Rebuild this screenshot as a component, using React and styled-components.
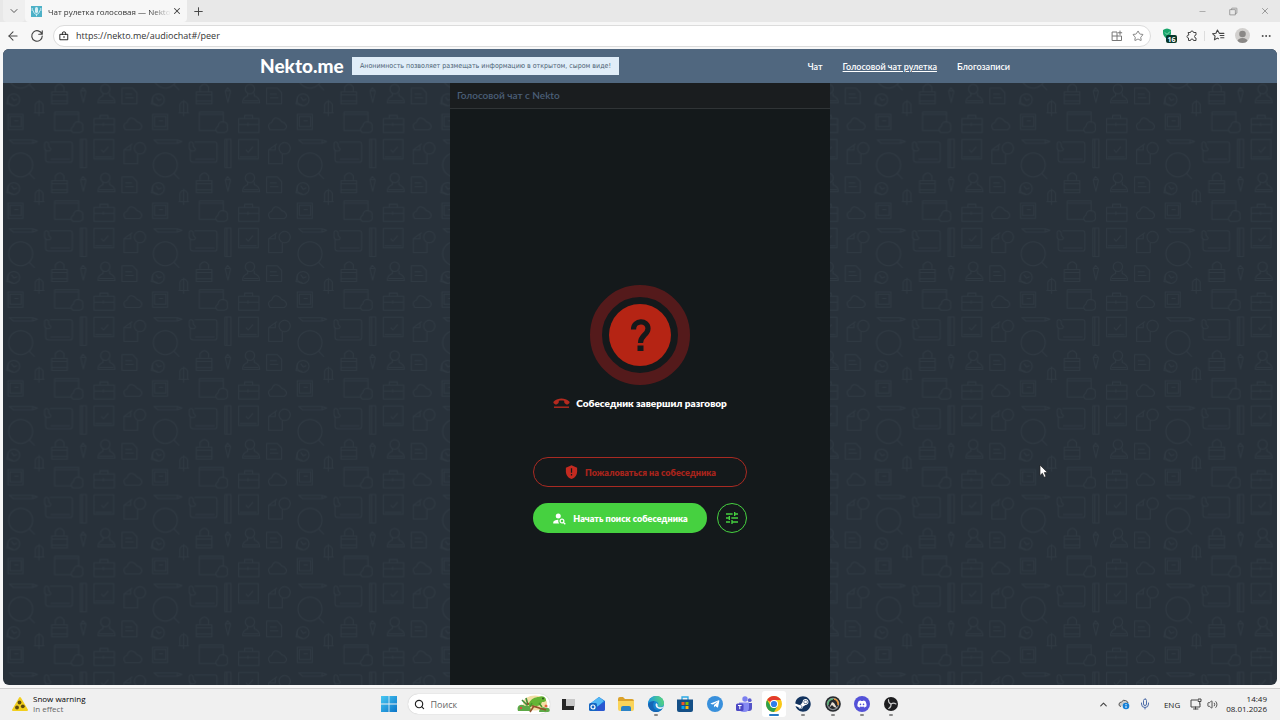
import React from 'react';
import styled, { createGlobalStyle } from 'styled-components';
import { FaDiscord, FaSteam, FaTelegramPlane } from 'react-icons/fa';
import { MdPersonSearch, MdTune } from 'react-icons/md';
import {
  ArrowLeft,
  ChevronDown,
  ChevronUp,
  Mic,
  Minus,
  MoreHorizontal,
  Plus,
  Search,
  Star,
  Volume2,
  X,
} from 'lucide-react';

const GlobalStyle = createGlobalStyle`
  * {
    box-sizing: border-box;
  }

  body {
    margin: 0;
    font-family: 'Open Sans', 'Noto Sans', sans-serif;
    background: #f7f7f7;
  }

  button, input {
    font: inherit;
    border: 0;
    padding: 0;
    background: none;
  }

  svg {
    display: block;
    flex-shrink: 0;
  }
`;

const Desktop = styled.div`
  display: flex;
  flex-direction: column;
  min-height: 100vh;
  position: relative;
`;

/* Browser window */

const TabStrip = styled.div`
  display: flex;
  align-items: stretch;
  height: 22px;
  padding-left: 3px;
  background: #e8e8e8;
  color: #444;
`;

const IconButton = styled.button`
  display: flex;
  align-items: center;
  justify-content: center;
  width: ${({ $width }) => $width || 24}px;
  color: ${({ $color }) => $color || '#444'};
`;

const TabMenu = styled(IconButton)`
  background: #efefef;
  border-radius: 0 0 4px 4px;
`;

const Tab = styled.div`
  display: flex;
  align-items: center;
  width: 162px;
  padding: 0 4px 0 6px;
  background: #f7f7f7;
  border-radius: 0 0 4px 4px;
`;

const TabTitle = styled.span`
  flex: 1;
  margin-left: 6px;
  white-space: nowrap;
  font-size: 8px;
  color: #333;
  mask-image: linear-gradient(90deg, #000 84%, transparent);
`;

const WindowControls = styled.div`
  display: flex;
  margin-left: auto;
`;

const Toolbar = styled.div`
  display: flex;
  align-items: center;
  height: 27px;
  padding: 0 2px 0 1px;
`;

const AddressBar = styled.div`
  display: flex;
  flex: 1;
  align-items: center;
  height: 22px;
  margin: 0 6px 0 4px;
  padding: 0 2px 0 5px;
  background: #fff;
  border: 1px solid #dcdcdc;
  border-radius: 11px;
`;

const AddressInput = styled.input`
  flex: 1;
  margin-left: 7px;
  font-size: 9px;
  color: #333;
  outline: none;
`;

const Divider = styled.span`
  width: 1px;
  height: 10px;
  margin: 0 1px;
  background: #ddd;
`;

const Avatar = styled.span`
  display: block;
  overflow: hidden;
  width: 15px;
  height: 15px;
  border-radius: 50%;
  background: #d2d0ce;
`;

/* Site */

const Page = styled.div`
  display: flex;
  flex: 1;
  flex-direction: column;
  margin: 0 3px 3px;
  overflow: hidden;
  border-radius: 6px;
  background: #28313a;
  font-family: Lato, 'Noto Sans', sans-serif;
`;

const SiteHeader = styled.header`
  display: flex;
  justify-content: center;
  background: #50677f;
`;

const HeaderInner = styled.div`
  display: flex;
  align-items: center;
  width: 760px;
  height: 34px;
`;

const Logo = styled.a`
  width: 92px;
  color: #fff;
  font-size: 19px;
  font-weight: 900;
  line-height: 32px;
  text-decoration: none;
`;

const Banner = styled.div`
  height: 18px;
  padding: 0 8px;
  background: #e0edf8;
  color: #4b5f73;
  font-family: 'DejaVu Sans Condensed', 'DejaVu Sans', sans-serif;
  font-size: 7px;
  line-height: 19px;
  white-space: nowrap;
`;

const Nav = styled.nav`
  display: flex;
  gap: 20px;
  margin-left: auto;
  padding-right: 10px;
`;

const NavLink = styled.a`
  color: #fff;
  font-size: 9px;
  font-weight: 600;
  white-space: nowrap;
  text-decoration: ${({ $active }) => ($active ? 'underline' : 'none')};
`;

const Stage = styled.div`
  display: grid;
  flex: 1;
  grid-template-columns: 1fr 380px 1fr;
`;

const Wallpaper = styled.svg`
  grid-area: 1 / 1 / 2 / 4;
  width: 100%;
  height: 100%;
`;

const Chat = styled.main`
  display: flex;
  grid-area: 1 / 2 / 2 / 3;
  flex-direction: column;
  background: #14191b;
  z-index: 1;
`;

const ChatTitle = styled.h1`
  height: 26px;
  margin: 0;
  padding: 0 7px;
  background: #1a1d1f;
  border-bottom: 1px solid #303436;
  color: #4b5f78;
  font-size: 10px;
  font-weight: 600;
  line-height: 25px;
`;

const Call = styled.section`
  display: flex;
  flex: 1;
  flex-direction: column;
  align-items: center;
  justify-content: center;
  padding-top: 24px;
`;

const Status = styled.p`
  display: flex;
  align-items: center;
  gap: 6px;
  height: 16px;
  margin: 10px 0 46px;
  color: #fff;
  font-size: 10px;
  font-weight: 800;
  white-space: nowrap;
`;

const Actions = styled.div`
  display: grid;
  grid-template-columns: 174px 30px;
  gap: 16px 10px;
`;

const ActionButton = styled.button`
  display: flex;
  align-items: center;
  justify-content: center;
  gap: 6px;
  height: 30px;
  border-radius: 15px;
  font-size: 9px;
  font-weight: 800;
  white-space: nowrap;
`;

const ReportButton = styled(ActionButton)`
  grid-column: 1 / 3;
  border: 1px solid #a82a22;
  color: #a8241c;
`;

const SearchButton = styled(ActionButton)`
  background: #46d140;
  color: #fff;
`;

const SettingsButton = styled(ActionButton)`
  border: 1px solid #46d140;
  color: #46d140;
`;

/* Taskbar */

const Taskbar = styled.footer`
  display: grid;
  grid-template-columns: 1fr auto 1fr;
  height: 32px;
  padding-bottom: 1px;
  background: #f0f0f0;
  border-top: 1px solid #cfcfcf;
  color: #222;
`;

const Weather = styled.button`
  display: flex;
  align-items: center;
  gap: 5px;
  padding-left: 12px;
  font-size: 8px;
  line-height: 10px;
  text-align: left;
`;

const Muted = styled.div`
  color: #666;
`;

const Dock = styled.div`
  display: flex;
  align-items: center;
`;

const SearchBox = styled.label`
  display: flex;
  align-items: center;
  width: 142px;
  height: 20px;
  margin: 0 4px;
  padding-left: 6px;
  background: #fff;
  border-radius: 10px;
  box-shadow: 0 0 1px #aaa;
`;

const SearchInput = styled.input`
  flex: 1;
  min-width: 0;
  margin-left: 6px;
  font-size: 9px;
  outline: none;

  &::placeholder {
    color: #666;
  }
`;

const AppList = styled.div`
  display: flex;
  justify-content: space-between;
  width: 352px;
`;

const AppButton = styled.button`
  display: flex;
  flex-direction: column;
  align-items: center;
  justify-content: center;
  gap: 2px;
  width: 24px;
  height: 26px;
  margin: 0 2px;
  padding-top: 4px;
  border-radius: 3px;
  background: ${({ $active }) => ($active ? '#fff' : 'none')};

  &::after {
    content: '';
    width: ${({ $active }) => ($active ? 10 : 4)}px;
    height: 2px;
    border-radius: 1px;
    background: ${({ $active, $open }) =>
      $active ? '#2779c4' : $open ? '#888' : 'transparent'};
  }
`;

const AppCircle = styled.span`
  display: flex;
  align-items: center;
  justify-content: center;
  width: 16px;
  height: 16px;
  border-radius: 50%;
  background: ${({ $color }) => $color};
  color: #fff;
`;

const Tray = styled.div`
  display: flex;
  align-items: center;
  justify-content: flex-end;
  padding-right: 13px;
  font-size: 8px;
`;

const Language = styled.span`
  margin: 0 8px;
`;

const Clock = styled.time`
  margin-left: 6px;
  line-height: 10px;
  text-align: right;
`;

const Cursor = styled.svg`
  position: absolute;
  left: 1039px;
  top: 464px;
  z-index: 2;
  pointer-events: none;
`;

const LineIcon = ({ size = 12, children }) => (
  <svg
    width={size}
    height={size}
    viewBox="0 0 24 24"
    fill="none"
    stroke="currentColor"
    strokeWidth="2"
    strokeLinecap="round"
    strokeLinejoin="round"
  >
    {children}
  </svg>
);

const Favicon = () => (
  <svg width="11" height="11" viewBox="0 0 11 11">
    <rect width="11" height="11" fill="#4db1c7" />
    <rect x="4" y="1" width="3" height="6" rx="1.5" fill="#d7eff5" />
    <path
      d="M2.4 4.5c0 5 6.200 5 6.200 0M5.500 8.200v2M1.200 2v3M9.800 2v3"
      fill="none"
      stroke="#d7eff5"
      strokeWidth="0.9"
    />
  </svg>
);

const Doodles = () => (
  <Wallpaper aria-hidden="true">
    <defs>
      <pattern
        id="doodles"
        width="434"
        height="266.5"
        patternUnits="userSpaceOnUse"
        patternTransform="translate(1.67 54.3) scale(0.3333)"
      >
        <g
          transform="translate(-14 -172)"
          fill="none"
          stroke="#303a43"
          strokeWidth="3"
          strokeLinejoin="round"
        >
          <path d="M28 180H98L112 185 98 190H40zM98 180v10" />
          <circle cx="62" cy="255" r="36" />
          <path d="M88 281l16 16" />
          <path d="M150 186H212Q217 186 217 192V240Q217 247 210 247H146Q137 247 137 238V212M134 190c4-8 14-2 12 6s10 8 6 14-18 4-18-6zM152 238H210" />
          <path d="M241 178h18v85h-18zM247 178v85" />
          <path d="M282 179h59v58h-59zM286 231h50M304 210l7 7 14-16" />
          <path d="M397 192L372 210V251H413V222M372 210h20v-14" />
          <circle cx="420" cy="205" r="17" />
          <path d="M155 302H202V338H155zM155 311h47M155 330h47M166 300V288Q180 270 192 288V300" />
          <path d="M249 290l9 10-8 34-8-34zM244 299h12" />
          <circle cx="316" cy="294" r="14" />
          <path d="M309 306v8q-15 5-15 21h51q0-16-16-21v-8M298 329h43" />
          <path d="M366 291H398L411 305V338H366zM376 309h20M376 320h25" />
          <circle cx="41" cy="326" r="18" />
          <path d="M34 318l8 10 9-4M25 318l-5 20 19 3" />
          <path d="M106 365V340Q117 320 129 340V365zM102 365h31M117 327v48" />
          <path d="M24 370H69V415H24zM30 376h34v30H30zM43 389h12" />
          <path d="M164 363H236V394M214 418H164V363M164 370h72" />
          <path d="M218 424q-10-10 2-18 3-18 19-13 12 3 9 15 4 14-9 16z" />
          <path d="M282 382H343V424H282zM282 400h61M300 381v-8h24v8M310 395v10" />
          <path d="M376 416q-11-16 5-22 8-22 25-8 5 8 14 10 12 12-1 20z" />
        </g>
      </pattern>
    </defs>
    <rect width="100%" height="100%" fill="url(#doodles)" />
  </Wallpaper>
);

const CallBadge = () => (
  <svg width="100" height="100" viewBox="0 0 100 100">
    <circle cx="50" cy="50" r="44" fill="none" stroke="#541a1b" strokeWidth="12" />
    <circle cx="50" cy="50" r="31" fill="#b52414" />
    <path
      d="M43.500 44.500C43.500 34.500 58 34.500 58 43.500C58 50 50.500 50 50.500 58"
      fill="none"
      stroke="#14191b"
      strokeWidth="5.200"
    />
    <rect x="47.500" y="60.500" width="6" height="5.500" fill="#14191b" />
  </svg>
);

const HangUpIcon = () => (
  <svg width="17" height="12" viewBox="0 0 17 12" fill="#b52a1f">
    <path d="M1 6.500C.2 5.800.2 5 1 4.200 5.200.6 11.800.6 16 4.200c.8.8.8 1.600 0 2.300L14.600 7.400c-.6.3-1.100.2-1.600-.2l-1.300-1c-.4-.3-.5-.7-.5-1.100V3.800C9.500 3.300 7.500 3.300 5.800 3.800v1.300c0 .4-.1.800-.5 1.100L4 7.200c-.5.4-1 .5-1.600.2z" />
    <rect x="1" y="9.500" width="15" height="1.400" />
  </svg>
);

const ShieldIcon = () => (
  <svg width="15" height="16" viewBox="0 0 24 24" fill="#c32a20">
    <path d="M12 1L3 5v6c0 5.550 3.840 10.740 9 12 5.160-1.260 9-6.450 9-12V5z" />
    <path d="M11 6h2v7h-2zM11 15h2v2.500h-2z" fill="#14191b" />
  </svg>
);

const SnowIcon = () => (
  <svg width="16" height="16" viewBox="0 0 16 16">
    <path
      d="M8 2L15 14H1z"
      fill="#f2cf1d"
      stroke="#f2cf1d"
      strokeWidth="2"
      strokeLinejoin="round"
    />
    <g fill="#5c4a10">
      <circle cx="7.500" cy="6.500" r="1.900" />
      <circle cx="5" cy="11.500" r="1.900" />
      <circle cx="10.800" cy="10.300" r="1.900" />
    </g>
  </svg>
);

const WindowsLogo = () => (
  <svg width="16" height="16" viewBox="0 0 16 16">
    <defs>
      <linearGradient id="win" x1="0" y1="0" x2="1" y2="1">
        <stop offset="0" stopColor="#48c8f2" />
        <stop offset="1" stopColor="#0a74c8" />
      </linearGradient>
    </defs>
    <path d="M0 0h7.600v7.600H0zM8.400 0H16v7.600H8.400zM0 8.400h7.600V16H0zM8.400 8.400H16V16H8.400z" fill="url(#win)" />
  </svg>
);

const Gecko = () => (
  <svg width="33" height="18" viewBox="0 0 33 18">
    <ellipse cx="18" cy="8" rx="12" ry="7.500" fill="#f3dfa6" />
    <path d="M1 16C-1 11 4 8 8 11c2-2 6 0 6 5zM22 17c0-4 4-6 7-4 4-1 5 4 2 4z" fill="#5da947" />
    <path d="M5 5l5 5M9 3l2 7" stroke="#3f8c3b" strokeWidth="1.600" />
    <path d="M10 8c4 3 9 4 19 7M17 11l-4 6" fill="none" stroke="#96512b" strokeWidth="1.600" />
    <path d="M12 8c2-4 6-6 10-6 3-2 7 0 7 3 0 2-3 2-4 2-1 4-6 5-9 3l-4 2z" fill="#65b534" />
    <path d="M15 8l-2 4M22 8l3 4" stroke="#4b952c" strokeWidth="1.500" />
    <circle cx="26" cy="3.500" r="0.900" fill="#24491a" />
    <circle cx="29" cy="11" r="1.500" fill="#e4643e" />
    <circle cx="4" cy="13" r="1.200" fill="#d9533a" />
  </svg>
);

const TaskViewIcon = () => (
  <svg width="16" height="16" viewBox="0 0 16 16">
    <path d="M5 3h10v8H5z" fill="#c8c8c8" />
    <path d="M2 3h4v7h8v4H2z" fill="#262626" />
  </svg>
);

const OutlookIcon = () => (
  <svg width="16" height="16" viewBox="0 0 16 16">
    <path d="M2 7l8-6 6 4v8q0 2-2 2H5z" fill="#1b6fd8" />
    <path d="M2 7l8-6 5 4-7 6z" fill="#52b8f5" />
    <path d="M3 14L16 6v7q0 2-2 2H5z" fill="#2a56d0" />
    <rect y="7" width="8" height="8" rx="1.500" fill="#1466c2" />
    <circle cx="4" cy="11" r="2" fill="none" stroke="#fff" strokeWidth="1.200" />
  </svg>
);

const FolderIcon = () => (
  <svg width="16" height="16" viewBox="0 0 16 16">
    <path d="M0 3q0-2 2-2h3l2 2h7q2 0 2 2v5H0z" fill="#dba22a" />
    <path d="M0 5h16v8q0 2-2 2H2q-2 0-2-2z" fill="#fad45a" />
    <path d="M3 15v-3q0-2 2-2h6q2 0 2 2v3z" fill="#2b83c6" />
  </svg>
);

const EdgeIcon = () => (
  <svg width="16" height="16" viewBox="0 0 16 16">
    <defs>
      <linearGradient id="edge" x1="0" y1="0.300" x2="1" y2="0">
        <stop offset="0" stopColor="#1b9de2" />
        <stop offset="1" stopColor="#5fdc6c" />
      </linearGradient>
    </defs>
    <circle cx="8" cy="8" r="8" fill="#1484d2" />
    <path d="M0 8C1 4 5 4 6.500 5.500 4 8 5 13 9 14.300c2 .6 4.200-.3 5.600-1.800C11 18 1 17.500 0 8z" fill="#1565b5" />
    <path d="M0 8C1-2 15-3 16 7c.3 4-5 4.800-6.400 3 1.200-1 1-4.400-2.600-4.800C4 4.800 1 6 0 8z" fill="url(#edge)" />
    <path d="M8 7.300c1.600.2 2 1.700 1.500 2.700 1 1.900 5 1.800 6.200-.2-.3 2-1.800 3.200-3.400 3.200C8.500 13 6.700 9.500 8 7.300z" fill="#eef4f7" />
  </svg>
);

const StoreIcon = () => (
  <svg width="16" height="16" viewBox="0 0 16 16">
    <path d="M5 4V1h6v3" fill="none" stroke="#2aa8e5" strokeWidth="1.300" />
    <path d="M0 3.500h16V14q0 2-2 2H2q-2 0-2-2z" fill="#154f86" />
    <path d="M4.500 6h3v3h-3z" fill="#f35325" />
    <path d="M8.500 6h3v3h-3z" fill="#81bc06" />
    <path d="M4.500 10h3v3h-3z" fill="#05a6f0" />
    <path d="M8.500 10h3v3h-3z" fill="#ffba08" />
  </svg>
);

const TeamsIcon = () => (
  <svg width="16" height="16" viewBox="0 0 16 16">
    <circle cx="9" cy="3" r="2.700" fill="#7b7ff0" />
    <circle cx="13.700" cy="4.200" r="1.900" fill="#5a5bd0" />
    <path d="M10 7h6v5q0 3-3 3h-3z" fill="#5454c8" />
    <path d="M3 6.500h10V12q0 4-5 4T3 12z" fill="#8589f2" />
    <rect y="7.500" width="7.500" height="7.500" rx="1.500" fill="#4c48c4" />
    <path d="M2 9.500h3.600M3.800 9.500v3.700" stroke="#fff" />
  </svg>
);

const ChromeIcon = () => (
  <svg width="16" height="16" viewBox="0 0 16 16">
    <circle cx="8" cy="8" r="8" fill="#f9c716" />
    <path d="M8 8L1.100 4A8 8 0 0 1 14.900 4L8 4z" fill="#e33b2e" />
    <path d="M1.100 4L4.600 10 8 12l0 4A8 8 0 0 1 1.100 4z" fill="#2da04d" />
    <path d="M8 16l3.500-6L8 12z" fill="#2da04d" />
    <circle cx="8" cy="8" r="4" fill="#fff" />
    <circle cx="8" cy="8" r="3.100" fill="#2e7de9" />
  </svg>
);

const GameIcon = () => (
  <svg width="16" height="16" viewBox="0 0 16 16">
    <circle cx="8" cy="8" r="7.800" fill="#25282c" />
    <circle cx="8" cy="8" r="5.600" fill="none" stroke="#858b90" strokeWidth="1.200" />
    <path d="M3 9a5 5 0 0 1 5-6" fill="none" stroke="#5fb27a" strokeWidth="1.600" />
    <path d="M9 3a5 5 0 0 1 4 6" fill="none" stroke="#e8963a" strokeWidth="1.600" />
    <path d="M4 12l3-6 2 1 3 5-3-1-2-2z" fill="#e6ddd2" />
  </svg>
);

const ObsIcon = () => (
  <svg width="16" height="16" viewBox="0 0 16 16">
    <circle cx="8" cy="8" r="7" fill="#1d1d1f" />
    <g fill="none" stroke="#c9c9c9" strokeWidth="1.100" strokeLinecap="round">
      <path d="M5.500 3.500q-.5 3 2.500 4.500" />
      <path d="M13 8q-2.500-1.700-5 0" />
      <path d="M5.700 12.500q2.700-1.300 2.300-4.500" />
    </g>
  </svg>
);

const apps = [
  { name: 'Task View', icon: <TaskViewIcon /> },
  { name: 'Outlook', icon: <OutlookIcon /> },
  { name: 'Explorer', icon: <FolderIcon /> },
  { name: 'Edge', icon: <EdgeIcon />, open: true },
  { name: 'Store', icon: <StoreIcon /> },
  {
    name: 'Telegram',
    icon: (
      <AppCircle $color="#3990dc">
        <FaTelegramPlane size={10} />
      </AppCircle>
    ),
  },
  { name: 'Teams', icon: <TeamsIcon /> },
  { name: 'Chrome', icon: <ChromeIcon />, active: true },
  {
    name: 'Steam',
    icon: (
      <AppCircle $color="#fff">
        <FaSteam size={16} color="#12335e" />
      </AppCircle>
    ),
    open: true,
  },
  { name: 'Game', icon: <GameIcon />, open: true },
  {
    name: 'Discord',
    icon: (
      <AppCircle $color="#5452d8">
        <FaDiscord size={10} />
      </AppCircle>
    ),
    open: true,
  },
  { name: 'OBS', icon: <ObsIcon />, open: true },
];

const links = [
  { label: 'Чат', href: '#/chat' },
  { label: 'Голосовой чат рулетка', href: '#/peer', active: true },
  { label: 'Блогозаписи', href: '#/blog' },
];

const BrowserChrome = () => (
  <>
    <TabStrip>
      <TabMenu $width={22} aria-label="Tabs">
        <ChevronDown size={12} strokeWidth={1.800} />
      </TabMenu>
      <Tab>
        <Favicon />
        <TabTitle>Чат рулетка голосовая — Nekto</TabTitle>
        <IconButton $width={14} aria-label="Close tab">
          <X size={10} strokeWidth={2.500} />
        </IconButton>
      </Tab>
      <IconButton $width={22} aria-label="New tab">
        <Plus size={13} strokeWidth={1.800} />
      </IconButton>
      <WindowControls>
        <IconButton $width={31} $color="#999" aria-label="Minimize">
          <Minus size={9} />
        </IconButton>
        <IconButton $width={31} $color="#888" aria-label="Restore">
          <LineIcon size={9}>
            <path d="M3 7h14v14H3zM7 7V4q0-1 1-1h12q1 0 1 1v12q0 1-1 1h-3" />
          </LineIcon>
        </IconButton>
        <IconButton $width={31} $color="#888" aria-label="Close">
          <X size={10} />
        </IconButton>
      </WindowControls>
    </TabStrip>
    <Toolbar>
      <IconButton aria-label="Back">
        <ArrowLeft size={14} strokeWidth={1.800} />
      </IconButton>
      <IconButton aria-label="Reload">
        <LineIcon size={14}>
          <path d="M20.500 9A9 9 0 1 0 21 12M21 3v6h-6" />
        </LineIcon>
      </IconButton>
      <AddressBar>
        <LineIcon size={10}>
          <path d="M3 8h18v13H3zM8 8V5q0-3 4-3t4 3v3M12 13v3" />
        </LineIcon>
        <AddressInput
          aria-label="Address"
          defaultValue="https://nekto.me/audiochat#/peer"
        />
        <IconButton $width={22} $color="#777" aria-label="Apps">
          <LineIcon>
            <path d="M3 4h9v17H3zM3 12h18v9h-9M18 2v7M14.500 5.500h7" />
          </LineIcon>
        </IconButton>
        <IconButton $width={20} $color="#777" aria-label="Favorite">
          <Star size={12} strokeWidth={1.800} />
        </IconButton>
      </AddressBar>
      <IconButton aria-label="Protection, 16 blocked">
        <svg width="15" height="17" viewBox="0 0 15 17">
          <path d="M1 3Q5 0 9 3V7Q8 10 5 12Q1 9 1 6z" fill="#18a56b" />
          <path d="M3 5.500l2 2 3-3" fill="none" stroke="#8be0ba" />
          <rect x="4" y="8" width="11" height="8" rx="2" fill="#07382b" />
          <text x="9.500" y="14.500" fill="#fff" fontSize="7" fontWeight="700" textAnchor="middle">
            16
          </text>
        </svg>
      </IconButton>
      <IconButton $width={22} aria-label="Extensions">
        <LineIcon size={12}>
          <path d="M5 5h4a3 3 0 0 1 6 0h5v5a3 3 0 1 0 0 6v5h-5a3 3 0 0 0-6 0H5v-5a3 3 0 0 1 0-6z" />
        </LineIcon>
      </IconButton>
      <Divider />
      <IconButton aria-label="Favorites">
        <LineIcon size={13}>
          <path d="M17 8h-3.500L10 2 7.300 8 1 8.700l4.700 4.500L4.500 20 10 16.800l2 1M15 12h7M16 16h6M18 8h4" />
        </LineIcon>
      </IconButton>
      <IconButton aria-label="Profile">
        <Avatar>
          <svg width="15" height="15" viewBox="0 0 15 15" fill="#8a8886">
            <circle cx="7.500" cy="6" r="3.300" />
            <ellipse cx="7.500" cy="13" rx="5" ry="3" />
          </svg>
        </Avatar>
      </IconButton>
      <IconButton aria-label="Menu">
        <MoreHorizontal size={12} />
      </IconButton>
    </Toolbar>
  </>
);

const Site = () => (
  <Page>
    <SiteHeader>
      <HeaderInner>
        <Logo href="#/">Nekto.me</Logo>
        <Banner>
          Анонимность позволяет размещать информацию в открытом, сыром виде!
        </Banner>
        <Nav>
          {links.map(({ label, href, active }) => (
            <NavLink key={href} href={href} $active={active}>
              {label}
            </NavLink>
          ))}
        </Nav>
      </HeaderInner>
    </SiteHeader>
    <Stage>
      <Doodles />
      <Chat>
        <ChatTitle>Голосовой чат с Nekto</ChatTitle>
        <Call>
          <CallBadge />
          <Status>
            <HangUpIcon />
            Собеседник завершил разговор
          </Status>
          <Actions>
            <ReportButton>
              <ShieldIcon />
              Пожаловаться на собеседника
            </ReportButton>
            <SearchButton>
              <MdPersonSearch size={15} />
              Начать поиск собеседника
            </SearchButton>
            <SettingsButton aria-label="Настройки">
              <MdTune size={16} />
            </SettingsButton>
          </Actions>
        </Call>
      </Chat>
    </Stage>
  </Page>
);

const SystemBar = () => (
  <Taskbar>
    <Weather>
      <SnowIcon />
      <div>
        <div>Snow warning</div>
        <Muted>In effect</Muted>
      </div>
    </Weather>
    <Dock>
      <IconButton $width={29} aria-label="Start">
        <WindowsLogo />
      </IconButton>
      <SearchBox>
        <Search size={11} strokeWidth={2.500} />
        <SearchInput placeholder="Поиск" aria-label="Поиск" />
        <Gecko />
      </SearchBox>
      <AppList>
        {apps.map(({ name, icon, open, active }) => (
          <AppButton key={name} aria-label={name} $open={open} $active={active}>
            {icon}
          </AppButton>
        ))}
      </AppList>
    </Dock>
    <Tray>
      <IconButton $width={21} aria-label="Hidden icons">
        <ChevronUp size={11} strokeWidth={2.500} />
      </IconButton>
      <IconButton $width={21} aria-label="OneDrive">
        <svg width="12" height="12" viewBox="0 0 12 12">
          <path d="M3 8.500Q.5 8 1 6t2.500-2Q5 1.500 7.500 2.500T10 5" fill="#ccc" stroke="#555" />
          <circle cx="8" cy="8" r="3.300" fill="#1580d8" />
          <path d="M8 6v1M8 7.700v2.300" stroke="#fff" />
        </svg>
      </IconButton>
      <IconButton $width={21} $color="#4e6da8" aria-label="Microphone">
        <Mic size={12} />
      </IconButton>
      <Language>ENG</Language>
      <IconButton $width={16} aria-label="Network">
        <LineIcon>
          <path d="M14 4H2v14h18v-6M7 22h9M11 18v4M17 2h5v5h-5zM19.500 7v5" />
        </LineIcon>
      </IconButton>
      <IconButton $width={16} aria-label="Volume">
        <Volume2 size={11} />
      </IconButton>
      <Clock>
        <div>14:49</div>
        <div>08.01.2026</div>
      </Clock>
    </Tray>
  </Taskbar>
);

const App = () => (
  <Desktop>
    <GlobalStyle />
    <BrowserChrome />
    <Site />
    <SystemBar />
    <Cursor width="10" height="15" viewBox="0 0 10 15" aria-hidden="true">
      <path
        d="M1 1v10.500l2.400-2.200 1.700 4 1.900-.8-1.700-3.900H8.500z"
        fill="#fff"
        stroke="#222"
        strokeWidth="0.700"
      />
    </Cursor>
  </Desktop>
);

export default App;
